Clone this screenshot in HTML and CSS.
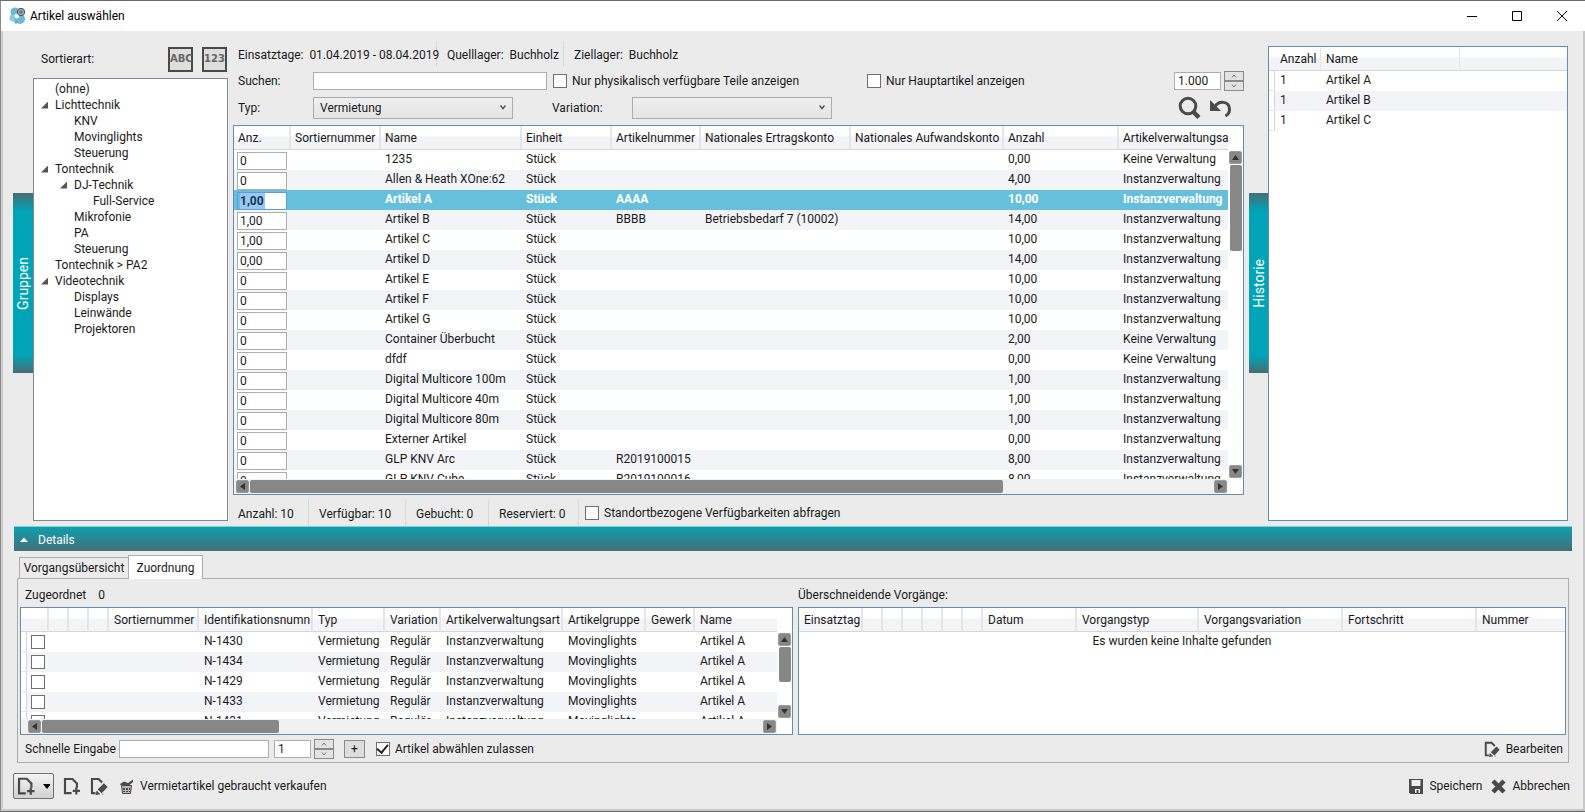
FILE: index.html
```html
<!DOCTYPE html>
<html lang="de">
<head>
<meta charset="utf-8">
<title>Artikel auswählen</title>
<link rel="stylesheet" href="styles.css">
</head>
<body>
<svg class="defs" aria-hidden="true">
  <symbol id="page-add" viewBox="0 0 20 20"><path d="M9.500 18H2.200V2.200h8.300l5 5V12" fill="none" stroke="#4a4a4a" stroke-width="2.400"/><path d="M14.800 11.500v8M10.800 15.500h8" stroke="#4a4a4a" stroke-width="2.400"/></symbol>
  <symbol id="page-edit" viewBox="0 0 20 20"><path d="M6 18H2.200V2.200h7.300l4 4" fill="none" stroke="#4a4a4a" stroke-width="2.400"/><path d="M8.500 14 15.500 7l4 4-6.500 7z" fill="#4a4a4a"/><path d="M7.500 15.500l3.500 3.500-4.500.7zM13 19h2" fill="#4a4a4a" stroke="#4a4a4a" stroke-width=".6"/></symbol>
</svg>
<div class="window">
  <header class="titlebar">
    <svg class="logo" width="18" height="18" viewBox="0 0 18 18"><circle cx="6" cy="5" r="4.500" fill="#6bb9d2"/><circle cx="4" cy="11" r="3.500" fill="#8dcadd"/><circle cx="11" cy="12" r="5" fill="#6bb9d2"/><circle cx="8" cy="9" r="2.400" fill="#fff"/><circle cx="7" cy="15" r="1.800" fill="#5bb2cd"/><circle cx="12" cy="5" r="3.700" fill="#9fb4b8" stroke="#47545a"/><circle cx="12" cy="5" r="2" fill="#6d8084"/></svg>
    <h1>Artikel auswählen</h1>
    <div class="controls">
      <button aria-label="Minimieren"><svg width="12" height="12"><path d="M1 6.500h10" stroke="#000"/></svg></button>
      <button aria-label="Maximieren"><svg width="12" height="12"><path d="M1.500 1.500h9v9h-9z" fill="none" stroke="#000"/></svg></button>
      <button aria-label="Schließen"><svg width="12" height="12"><path d="M1 1l10 10M11 1L1 11" stroke="#000"/></svg></button>
    </div>
  </header>

  <main class="upper">
    <button class="side-tab side-left"><span>Gruppen</span></button>
    <section class="groups">
      <div class="sort">
        <span>Sortierart:</span>
        <button class="sort-btn">ABC</button>
        <button class="sort-btn">123</button>
      </div>
      <ul class="tree">
        <li>(ohne)</li>
        <li class="open">Lichttechnik</li>
        <li class="l2">KNV</li>
        <li class="l2">Movinglights</li>
        <li class="l2">Steuerung</li>
        <li class="open">Tontechnik</li>
        <li class="l2 open">DJ-Technik</li>
        <li class="l3">Full-Service</li>
        <li class="l2">Mikrofonie</li>
        <li class="l2">PA</li>
        <li class="l2">Steuerung</li>
        <li>Tontechnik &gt; PA2</li>
        <li class="open">Videotechnik</li>
        <li class="l2">Displays</li>
        <li class="l2">Leinwände</li>
        <li class="l2">Projektoren</li>
      </ul>
    </section>

    <section class="articles">
      <div class="info">
        <span>Einsatztage:&nbsp; 01.04.2019 - 08.04.2019</span><span>Quelllager:&nbsp; Buchholz</span><span>Ziellager:&nbsp; Buchholz</span>
      </div>
      <div class="filters">
        <div class="filter-row">
          <label class="lead" for="search">Suchen:</label>
          <input class="text search" id="search" type="text">
          <label class="check physical"><input type="checkbox">Nur physikalisch verfügbare Teile anzeigen</label>
          <label class="check"><input type="checkbox">Nur Hauptartikel anzeigen</label>
          <div class="amount push">
            <input class="text limit" type="text" value="1.000" aria-label="Maximale Anzahl">
            <span class="spin"><button aria-label="Mehr"><svg width="6" height="4"><path d="M1 3.500L3 1l2 2.500" fill="none" stroke="#777"/></svg></button><button aria-label="Weniger"><svg width="6" height="4"><path d="M1 .5L3 3 5 .5" fill="none" stroke="#777"/></svg></button></span>
          </div>
        </div>
        <div class="filter-row type-row">
          <label class="lead" for="type">Typ:</label>
          <select id="type"><option>Vermietung</option></select>
          <label class="variation" for="variation">Variation:</label>
          <select id="variation"><option></option></select>
          <div class="tools push">
            <button aria-label="Suchen"><svg width="24" height="24" viewBox="0 0 24 24"><circle cx="10" cy="10" r="7.800" fill="none" stroke="#4a4a4a" stroke-width="3"/><path d="M15 15.500l6 6" stroke="#4a4a4a" stroke-width="4.500"/></svg></button>
            <button aria-label="Zurücksetzen"><svg width="24" height="24" viewBox="0 0 24 24"><path d="M6 10.500C10 4 20.500 5 20.500 13.500c0 2.800-1.500 5-4 6.500" fill="none" stroke="#4a4a4a" stroke-width="3"/><path d="M1 4v11h11z" fill="#4a4a4a"/></svg></button>
          </div>
        </div>
      </div>

      <div class="grid main-grid">
        <div class="clip">
        <table>
          <colgroup><col class="w57"><col class="w90"><col class="w141"><col class="w90"><col class="w89"><col class="w150"><col class="w153"><col class="w115"><col></colgroup>
          <thead><tr><th>Anz.</th><th>Sortiernummer</th><th>Name</th><th>Einheit</th><th>Artikelnummer</th><th>Nationales Ertragskonto</th><th>Nationales Aufwandskonto</th><th>Anzahl</th><th>Artikelverwaltungsart</th></tr></thead>
          <tbody>
            <tr><td><input value="0" aria-label="Anzahl"></td><td></td><td>1235</td><td>Stück</td><td></td><td></td><td></td><td>0,00</td><td>Keine Verwaltung</td></tr>
            <tr><td><input value="0" aria-label="Anzahl"></td><td></td><td>Allen &amp; Heath XOne:62</td><td>Stück</td><td></td><td></td><td></td><td>4,00</td><td>Instanzverwaltung</td></tr>
            <tr class="selected"><td><input value="1,00" aria-label="Anzahl"></td><td></td><td>Artikel A</td><td>Stück</td><td>AAAA</td><td></td><td></td><td>10,00</td><td>Instanzverwaltung</td></tr>
            <tr><td><input value="1,00" aria-label="Anzahl"></td><td></td><td>Artikel B</td><td>Stück</td><td>BBBB</td><td>Betriebsbedarf 7 (10002)</td><td></td><td>14,00</td><td>Instanzverwaltung</td></tr>
            <tr><td><input value="1,00" aria-label="Anzahl"></td><td></td><td>Artikel C</td><td>Stück</td><td></td><td></td><td></td><td>10,00</td><td>Instanzverwaltung</td></tr>
            <tr><td><input value="0,00" aria-label="Anzahl"></td><td></td><td>Artikel D</td><td>Stück</td><td></td><td></td><td></td><td>14,00</td><td>Instanzverwaltung</td></tr>
            <tr><td><input value="0" aria-label="Anzahl"></td><td></td><td>Artikel E</td><td>Stück</td><td></td><td></td><td></td><td>10,00</td><td>Instanzverwaltung</td></tr>
            <tr><td><input value="0" aria-label="Anzahl"></td><td></td><td>Artikel F</td><td>Stück</td><td></td><td></td><td></td><td>10,00</td><td>Instanzverwaltung</td></tr>
            <tr><td><input value="0" aria-label="Anzahl"></td><td></td><td>Artikel G</td><td>Stück</td><td></td><td></td><td></td><td>10,00</td><td>Instanzverwaltung</td></tr>
            <tr><td><input value="0" aria-label="Anzahl"></td><td></td><td>Container Überbucht</td><td>Stück</td><td></td><td></td><td></td><td>2,00</td><td>Keine Verwaltung</td></tr>
            <tr><td><input value="0" aria-label="Anzahl"></td><td></td><td>dfdf</td><td>Stück</td><td></td><td></td><td></td><td>0,00</td><td>Keine Verwaltung</td></tr>
            <tr><td><input value="0" aria-label="Anzahl"></td><td></td><td>Digital Multicore 100m</td><td>Stück</td><td></td><td></td><td></td><td>1,00</td><td>Instanzverwaltung</td></tr>
            <tr><td><input value="0" aria-label="Anzahl"></td><td></td><td>Digital Multicore 40m</td><td>Stück</td><td></td><td></td><td></td><td>1,00</td><td>Instanzverwaltung</td></tr>
            <tr><td><input value="0" aria-label="Anzahl"></td><td></td><td>Digital Multicore 80m</td><td>Stück</td><td></td><td></td><td></td><td>1,00</td><td>Instanzverwaltung</td></tr>
            <tr><td><input value="0" aria-label="Anzahl"></td><td></td><td>Externer Artikel</td><td>Stück</td><td></td><td></td><td></td><td>0,00</td><td>Instanzverwaltung</td></tr>
            <tr><td><input value="0" aria-label="Anzahl"></td><td></td><td>GLP KNV Arc</td><td>Stück</td><td>R2019100015</td><td></td><td></td><td>8,00</td><td>Instanzverwaltung</td></tr>
            <tr><td><input value="0" aria-label="Anzahl"></td><td></td><td>GLP KNV Cube</td><td>Stück</td><td>R2019100016</td><td></td><td></td><td>8,00</td><td>Instanzverwaltung</td></tr>
          </tbody>
        </table>
        </div>
        <div class="vbar"><i class="btn up"></i><i class="thumb"></i><i class="btn down"></i></div>
        <div class="hbar"><i class="btn left"></i><i class="thumb"></i><i class="btn right"></i></div>
      </div>

      <div class="status">
        <span class="s1">Anzahl: 10</span><span class="s2">Verfügbar: 10</span><span class="s3">Gebucht: 0</span><span class="s4">Reserviert: 0</span>
        <label class="check"><input type="checkbox">Standortbezogene Verfügbarkeiten abfragen</label>
      </div>
    </section>

    <button class="side-tab side-right"><span>Historie</span></button>
    <section class="grid history">
      <table>
        <colgroup><col class="w6"><col class="w46"><col class="w139"><col></colgroup>
        <thead><tr><th></th><th>Anzahl</th><th>Name</th><th></th></tr></thead>
        <tbody>
          <tr><td></td><td>1</td><td>Artikel A</td><td></td></tr>
          <tr><td></td><td>1</td><td>Artikel B</td><td></td></tr>
          <tr><td></td><td>1</td><td>Artikel C</td><td></td></tr>
        </tbody>
      </table>
    </section>
  </main>

  <section class="details">
    <button class="details-bar"><svg width="8" height="5"><path d="M0 5l4-4.500L8 5z" fill="#fff"/></svg>Details</button>
    <div class="tabs" role="tablist"><button role="tab">Vorgangsübersicht</button><button role="tab" class="active">Zuordnung</button></div>
    <div class="tab-panel">
      <div class="assigned">
        <div class="caption"><span>Zugeordnet</span><span>0</span></div>
        <div class="grid assigned-grid">
          <div class="clip">
          <table>
            <colgroup><col class="w6"><col class="w22"><col class="w20"><col class="w20"><col class="w20"><col class="w90"><col class="w114"><col class="w72"><col class="w56"><col class="w122"><col class="w83"><col class="w49"><col></colgroup>
            <thead><tr><th></th><th></th><th></th><th></th><th></th><th>Sortiernummer</th><th>Identifikationsnumn</th><th>Typ</th><th>Variation</th><th>Artikelverwaltungsart</th><th>Artikelgruppe</th><th>Gewerk</th><th>Name</th></tr></thead>
            <tbody>
              <tr><td></td><td><input type="checkbox" aria-label="N-1430"></td><td></td><td></td><td></td><td></td><td>N-1430</td><td>Vermietung</td><td>Regulär</td><td>Instanzverwaltung</td><td>Movinglights</td><td></td><td>Artikel A</td></tr>
              <tr><td></td><td><input type="checkbox" aria-label="N-1434"></td><td></td><td></td><td></td><td></td><td>N-1434</td><td>Vermietung</td><td>Regulär</td><td>Instanzverwaltung</td><td>Movinglights</td><td></td><td>Artikel A</td></tr>
              <tr><td></td><td><input type="checkbox" aria-label="N-1429"></td><td></td><td></td><td></td><td></td><td>N-1429</td><td>Vermietung</td><td>Regulär</td><td>Instanzverwaltung</td><td>Movinglights</td><td></td><td>Artikel A</td></tr>
              <tr><td></td><td><input type="checkbox" aria-label="N-1433"></td><td></td><td></td><td></td><td></td><td>N-1433</td><td>Vermietung</td><td>Regulär</td><td>Instanzverwaltung</td><td>Movinglights</td><td></td><td>Artikel A</td></tr>
              <tr><td></td><td><input type="checkbox" aria-label="N-1431"></td><td></td><td></td><td></td><td></td><td>N-1431</td><td>Vermietung</td><td>Regulär</td><td>Instanzverwaltung</td><td>Movinglights</td><td></td><td>Artikel A</td></tr>
            </tbody>
          </table>
          </div>
          <div class="vbar"><i class="btn up"></i><i class="thumb"></i><i class="btn down"></i></div>
          <div class="hbar"><i class="btn left"></i><i class="thumb"></i><i class="btn right"></i></div>
        </div>
        <div class="quick">
          <label for="quick">Schnelle Eingabe</label>
          <input class="text quick-text" id="quick" type="text">
          <input class="text quick-count" type="text" value="1" aria-label="Menge">
          <span class="spin"><button aria-label="Mehr"><svg width="6" height="4"><path d="M1 3.500L3 1l2 2.500" fill="none" stroke="#777"/></svg></button><button aria-label="Weniger"><svg width="6" height="4"><path d="M1 .5L3 3 5 .5" fill="none" stroke="#777"/></svg></button></span>
          <button class="plus">+</button>
          <label class="check"><input type="checkbox" checked>Artikel abwählen zulassen</label>
        </div>
      </div>
      <div class="overlaps">
        <div class="caption"><span>Überschneidende Vorgänge:</span></div>
        <div class="grid overlap-grid">
          <table>
            <colgroup><col class="w64"><col class="w20"><col class="w20"><col class="w20"><col class="w20"><col class="w20"><col class="w20"><col class="w94"><col class="w122"><col class="w144"><col class="w134"><col></colgroup>
            <thead><tr><th>Einsatztag</th><th></th><th></th><th></th><th></th><th></th><th></th><th>Datum</th><th>Vorgangstyp</th><th>Vorgangsvariation</th><th>Fortschritt</th><th>Nummer</th></tr></thead>
            <tbody><tr><td colspan="12" class="empty">Es wurden keine Inhalte gefunden</td></tr></tbody>
          </table>
        </div>
        <div class="edit"><button class="link"><svg width="16" height="16"><use href="#page-edit"/></svg>Bearbeiten</button></div>
      </div>
    </div>
  </section>

  <footer class="actions">
    <button class="split" aria-label="Neu"><svg width="20" height="20"><use href="#page-add"/></svg><svg width="8" height="5"><path d="M0 0h8L4 5z"/></svg></button>
    <button class="link icon" aria-label="Hinzufügen"><svg width="20" height="20"><use href="#page-add"/></svg></button>
    <button class="link icon" aria-label="Bearbeiten"><svg width="20" height="20"><use href="#page-edit"/></svg></button>
    <button class="link sell"><svg width="14" height="15" viewBox="0 0 14 15"><path d="M1.500 6.500h10l-1 8h-8z" fill="#b5b5b5" stroke="#4a4a4a"/><path d="M0 5l4-2.500L8 4l5-3.500V3L9 6.500H1z" fill="#4a4a4a"/><path d="M3 9h2v2H3zm3 0h2v2H6zm3 0h1v2H9zm-6 3h2v1H3zm3 0h2v1H6zm3 0h1v1H9z" fill="#4a4a4a"/></svg>Vermietartikel gebraucht verkaufen</button>
    <button class="link push"><svg width="14" height="15" viewBox="0 0 14 15"><path d="M0 0h14v15H1.500L0 13.500z" fill="#4a4a4a"/><path d="M2.500 1h9v6h-9zM3 10h8v4H3z" fill="#eee"/><path d="M7.500 11h2v3h-2zM3 10h3v4H3z" fill="#4a4a4a"/></svg>Speichern</button>
    <button class="link"><svg width="15" height="15" viewBox="0 0 15 15"><path d="M2 2l11 11M13 2L2 13" stroke="#4a4a4a" stroke-width="4.500"/></svg>Abbrechen</button>
  </footer>
</div>
</body>
</html>
```

FILE: styles.css
```css
* { box-sizing: border-box; }
body { margin: 0; font: 12px/16px "Segoe UI", Roboto, "Open Sans", sans-serif; color: #1a1a1a; background: #ebebeb; }
button, input, select { font: inherit; color: inherit; margin: 0; padding: 0; border-radius: 0; }
button { background: none; border: 0; white-space: nowrap; }
h1 { font: inherit; margin: 0; }
.defs { position: absolute; width: 0; height: 0; }
.push { margin-left: auto; }

.window { min-height: 100vh; display: flex; flex-direction: column; background: #ebebeb; border-top: 1px solid #6a686b; border-left: 1px solid #8a8a8a; border-bottom: 1px solid #666; box-shadow: inset 2px 0 #d0cfcf, inset -2px -2px #c8c8c8; }
.titlebar { display: flex; align-items: center; gap: 3px; height: 30px; padding: 0 1px 0 8px; background: #fff; color: #000; }
.controls { display: flex; margin-left: auto; }
.controls button { width: 45px; height: 29px; display: grid; place-items: center; }

.upper { flex: 1; display: flex; padding: 0 17px 0 12px; }
.side-tab { align-self: flex-start; margin-top: 162px; height: 180px; padding: 0; color: #fff; font-size: 14px; background: linear-gradient(#476d75, #00a4b6 18px, #00a4b6 162px, #476d75); display: grid; place-items: center; }
.side-tab span { writing-mode: vertical-rl; transform: rotate(180deg); }
.side-left { width: 20px; }
.side-right { width: 19px; margin-left: 5px; }

.groups { width: 195px; display: flex; flex-direction: column; padding-top: 15px; margin-bottom: 5px; }
.sort { display: flex; align-items: center; gap: 9px; height: 26px; padding: 0 1px 0 8px; margin-bottom: 6px; }
.sort span { flex: 1; }
.sort-btn { width: 25px; height: 25px; border: 2px solid #4a4a4a; background: #dedede; font: bold 10px/20px "DejaVu Sans", sans-serif; color: #666; display: grid; place-items: center; }
.tree { flex: 1; margin: 0; padding: 2px 0 0; list-style: none; background: #fff; border: 1px solid #828790; }
.tree li { padding-left: 21px; display: flex; align-items: center; }
.tree .l2 { padding-left: 40px; }
.tree .l3 { padding-left: 59px; }
.tree .open::before { content: ""; width: 7px; height: 7px; margin: 0 7px 0 -14px; background: #555; clip-path: polygon(100% 0, 100% 100%, 0 100%); }

.articles { flex: 1; min-width: 0; display: flex; flex-direction: column; margin-left: 5px; padding-top: 10px; }
.info { display: flex; height: 26px; white-space: nowrap; }
.info span { padding: 6px 0 0 10px; border-right: 1px solid #d8d8d8; }
.info span:first-child { width: 204px; padding-left: 5px; }
.info span:nth-child(2) { width: 127px; }
.info span:last-child { border: 0; }
.filter-row { display: flex; align-items: center; height: 27px; padding-left: 5px; }
.type-row { margin-bottom: 4px; }
.lead { width: 75px; }
.text { height: 18px; border: 1px solid #abadb3; background: #fff; padding: 0 3px; }
.search { width: 234px; margin-right: 6px; }
.check { display: flex; align-items: center; gap: 5px; }
input[type="checkbox"] { appearance: none; width: 14px; height: 14px; border: 1px solid #6f6f6f; background: #fff; flex: none; display: grid; place-items: center; }
input[type="checkbox"]:checked::before { content: ""; width: 5px; height: 9px; border: solid #222; border-width: 0 2px 2px 0; transform: translateY(-1px) rotate(40deg); }
.physical { width: 314px; }
.amount { display: flex; align-items: center; gap: 3px; }
.limit { width: 47px; }
.spin { width: 20px; display: grid; }
.spin button { height: 10px; border: 1px solid #8a8a8a; background: #e3e3e3; display: grid; place-items: center; }
select { appearance: none; width: 200px; height: 22px; padding: 0 6px; border: 1px solid #acacac; background: url("data:image/svg+xml,%3Csvg xmlns='http://www.w3.org/2000/svg' width='6' height='5'%3E%3Cpath d='M.5 .5L3 3.500 5.500 .5' fill='none' stroke='%23555' stroke-width='1.500'/%3E%3C/svg%3E") right 6px center no-repeat, linear-gradient(#f0f0f0, #e4e4e4); }
.variation { width: 80px; margin-left: 39px; }
.tools { display: flex; gap: 7px; padding-right: 11px; }
.tools button, .tools svg { display: block; width: 24px; height: 24px; }

.grid { background: #fff; border: 1px solid #688caf; overflow: hidden; }
.clip { overflow: hidden; }
table { width: 100%; table-layout: fixed; border-collapse: separate; border-spacing: 0; }
th, td { padding: 0 0 0 5px; text-align: left; white-space: nowrap; overflow: hidden; }
.main-grid th, .main-grid td { padding-left: 4px; }
th { height: 24px; padding-top: 1px; font-weight: normal; border-right: 2px solid #e3e5e9; border-bottom: 1px solid #d5d5d5; background: linear-gradient(#fff 45%, #f3f4f8 46%); }
th:last-child { border-right: 0; }
td { height: 20px; padding-bottom: 3px; }
tbody tr:nth-child(even) { background: #f2f4f8; }
td input { display: block; }
td input:not([type]) { width: 50px; height: 18px; margin: 1px 0 0 -1px; padding: 0 2px; border: 1px solid #abadb3; background: #fff; color: #1a1a1a; }
.main-grid td { padding-bottom: 2px; }
.main-grid td:first-child { padding-bottom: 0; }
tbody .selected { background: #66c0dc; color: #fff; font-weight: bold; }
.selected td input:not([type]) { color: #17375e; border-color: #569de5; background: linear-gradient(90deg, transparent 2px, #99c9ef 2px, #99c9ef 27px, #fff 27px); }
td input[type="checkbox"] { margin: 2px 0 0 -1px; }
.w6 { width: 6px; } .w20 { width: 20px; } .w22 { width: 22px; } .w46 { width: 46px; } .w49 { width: 49px; }
.w56 { width: 56px; } .w57 { width: 57px; } .w64 { width: 64px; } .w72 { width: 72px; } .w83 { width: 83px; }
.w89 { width: 89px; } .w90 { width: 90px; } .w94 { width: 94px; } .w114 { width: 114px; } .w115 { width: 115px; }
.w122 { width: 122px; } .w134 { width: 134px; } .w139 { width: 139px; } .w141 { width: 141px; } .w144 { width: 144px; }
.w150 { width: 150px; } .w153 { width: 153px; }

.main-grid, .assigned-grid { display: grid; grid-template-columns: 1fr 15px; grid-template-rows: 1fr 15px; }
.main-grid { flex: 1 1 0; min-height: 370px; }
.main-grid .clip, .assigned-grid .clip { height: 0; min-height: 100%; }
.vbar { display: flex; flex-direction: column; align-items: center; gap: 1px; padding: 25px 1px 1px; }
.hbar { display: flex; gap: 1px; padding: 1px 1px 1px 2px; background: #f0f0f0; }
.btn, .thumb { display: block; border-radius: 2px; background: #878787; }
.btn { width: 13px; height: 13px; flex: none; display: grid; place-items: center; border: 1px solid #9b9b9b; }
.btn::before { content: ""; width: 7px; height: 5px; background: #333; clip-path: polygon(50% 0, 100% 100%, 0 100%); }
.down::before { transform: rotate(180deg); }
.left::before { transform: rotate(-90deg); }
.right::before { transform: rotate(90deg); }
.vbar .thumb { width: 12px; height: 86px; }
.hbar .thumb { width: 76%; height: 13px; }
.down { margin-top: auto; }
.right { margin-left: auto; }

.status { display: flex; height: 31px; padding-top: 4px; }
.status span { padding: 7px 0 0 10px; border-right: 1px solid #d8d8d8; }
.status .s1 { width: 76px; padding-left: 5px; }
.s2 { width: 97px; }
.s3 { width: 83px; }
.s4 { width: 90px; }
.status .check { margin-left: 6px; height: 27px; }

.history { width: 300px; margin: 15px 0 5px; }
.history th { border-right-width: 1px; }
.grid th:first-child:empty { border-right: 0; }
.grid td:first-child:empty { border-right: 1px solid #d5d5d5; border-bottom: 1px solid #e6e6e6; background: #fff; }
.details { padding: 0 13px 0 13px; }
.details-bar { width: 100%; height: 25px; padding: 1px 0 0 6px; display: flex; align-items: center; gap: 10px; color: #fff; background: linear-gradient(#0f9fad, #447078); border-top: 1px solid #7fd0d8; }
.tabs { display: flex; align-items: flex-end; height: 27px; padding-left: 5px; }
.tabs button { min-width: 110px; height: 21px; padding: 0 3px; border: 1px solid #acacac; border-bottom: 0; }
.tabs .active { position: relative; min-width: 75px; height: 24px; margin: 0 0 -1px -1px; background: #fff; }
.tab-panel { display: flex; gap: 5px; margin: 0 3px; padding: 0 2px; border: 1px solid #acacac; }
.assigned { flex: 1 1 773px; min-width: 0; }
.overlaps { flex: 1 1 768px; min-width: 0; }
.caption { height: 28px; padding: 8px 0 0 5px; display: flex; gap: 12px; }
.overlaps .caption { padding-left: 0; }
.assigned-grid, .overlap-grid { height: 128px; }
.assigned-grid .thumb { height: 35px; }
.assigned-grid .hbar { padding-left: 7px; }
.assigned-grid .hbar .thumb { width: 237px; height: 13px; }
.overlap-grid .empty { padding-left: 0; text-align: center; }
.quick { display: flex; align-items: center; height: 27px; padding-left: 5px; }
.quick-text { width: 150px; margin: 0 5px 0 3px; }
.quick-count { width: 37px; margin-right: 3px; }
.plus { width: 21px; height: 18px; margin: 0 11px 0 10px; border: 1px solid #8a8a8a; background: #ddd; line-height: 14px; }
.edit { display: flex; justify-content: flex-end; align-items: center; height: 27px; padding-right: 3px; }
.link { display: flex; align-items: center; gap: 6px; }

.actions { display: flex; align-items: center; gap: 9px; height: 48px; padding: 0 15px 2px 12px; }
.split { width: 41px; height: 26px; padding: 0 3px; display: flex; align-items: center; gap: 7px; border: 1px solid #707070; border-radius: 2px; background: linear-gradient(#f4f4f4, #d2d2d2); }
.actions .icon { width: 18px; }
.actions .sell { margin-left: 3px; }
.actions .push { margin-left: auto; }
```
